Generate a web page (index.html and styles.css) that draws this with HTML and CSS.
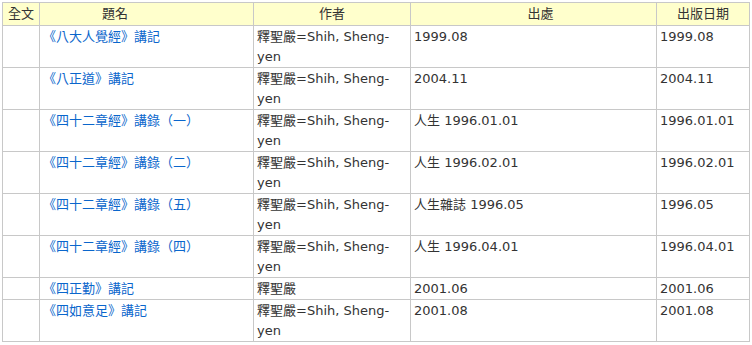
FILE: index.html
```html
<!DOCTYPE html>
<html lang="zh-Hant">
<head>
<meta charset="utf-8">
<title>列表</title>
<link rel="stylesheet" href="styles.css">
</head>
<body>
<table class="list">
  <colgroup>
    <col class="c-full">
    <col class="c-title">
    <col class="c-author">
    <col class="c-source">
    <col class="c-date">
  </colgroup>
  <thead>
    <tr>
      <th>全文</th>
      <th class="h-title">題名</th>
      <th>作者</th>
      <th class="h-source">出處</th>
      <th>出版日期</th>
    </tr>
  </thead>
  <tbody>
    <tr><td></td><td><a href="#">《八大人覺經》講記</a></td><td>釋聖嚴=Shih, Sheng-yen</td><td>1999.08</td><td>1999.08</td></tr>
    <tr><td></td><td><a href="#">《八正道》講記</a></td><td>釋聖嚴=Shih, Sheng-yen</td><td>2004.11</td><td>2004.11</td></tr>
    <tr><td></td><td><a href="#">《四十二章經》講錄（一）</a></td><td>釋聖嚴=Shih, Sheng-yen</td><td>人生 1996.01.01</td><td>1996.01.01</td></tr>
    <tr><td></td><td><a href="#">《四十二章經》講錄（二）</a></td><td>釋聖嚴=Shih, Sheng-yen</td><td>人生 1996.02.01</td><td>1996.02.01</td></tr>
    <tr><td></td><td><a href="#">《四十二章經》講錄（五）</a></td><td>釋聖嚴=Shih, Sheng-yen</td><td>人生雜誌 1996.05</td><td>1996.05</td></tr>
    <tr><td></td><td><a href="#">《四十二章經》講錄（四）</a></td><td>釋聖嚴=Shih, Sheng-yen</td><td>人生 1996.04.01</td><td>1996.04.01</td></tr>
    <tr><td></td><td><a href="#">《四正勤》講記</a></td><td>釋聖嚴</td><td>2001.06</td><td>2001.06</td></tr>
    <tr><td></td><td><a href="#">《四如意足》講記</a></td><td>釋聖嚴=Shih, Sheng-yen</td><td>2001.08</td><td>2001.08</td></tr>
  </tbody>
</table>
</body>
</html>
```
FILE: styles.css
```css
html, body {
  margin: 0;
  padding: 0;
  background: #ffffff;
}
body {
  padding: 2px 0 0 2px;
  font-family: "DejaVu Sans", "Noto Sans CJK TC", sans-serif;
  font-size: 13px;
  color: #333333;
}
.list {
  width: 748px;
  table-layout: fixed;
  border-collapse: collapse;
  border: 1px solid #c8c8c8;
}
.c-full { width: 37px; }
.c-title { width: 214px; }
.c-author { width: 157px; }
.c-source { width: 246px; }
.c-date { width: 93px; }

.list th,
.list td {
  border: 1px solid #c8c8c8;
  line-height: 20px;
  vertical-align: top;
  text-align: left;
  padding: 1px 3px 0;
  overflow: hidden;
}
.list th {
  background: #ffffcc;
  font-weight: normal;
  text-align: center;
  padding: 1px 3px;
  color: #333333;
}
.list th.h-title { padding-right: 66px; }
.list th.h-source { padding-left: 17px; }
.list a {
  color: #0a66cc;
  text-decoration: none;
}
```
